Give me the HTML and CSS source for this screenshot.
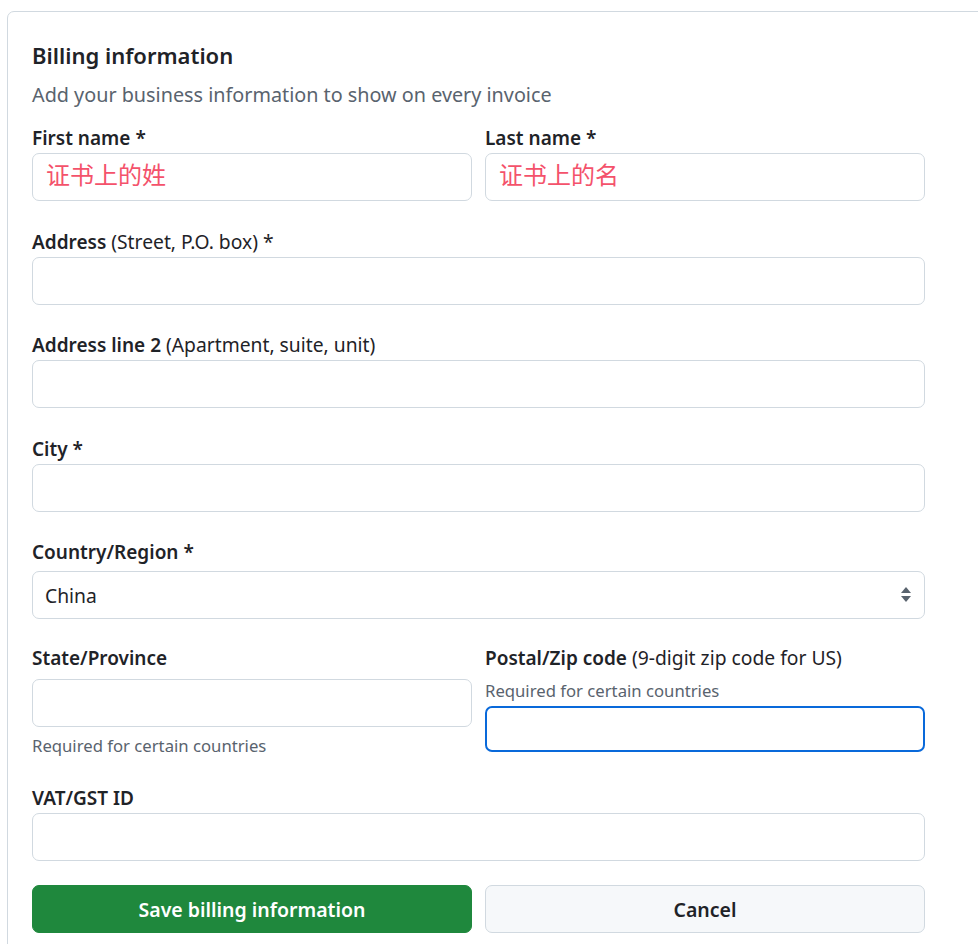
FILE: index.html
```html
<!DOCTYPE html>
<html lang="en">
<head>
<meta charset="utf-8">
<title>Billing information</title>
<link rel="stylesheet" href="styles.css">
</head>
<body>
<div class="card">
  <form class="form">
    <h2 class="title">Billing information</h2>
    <p class="subtitle">Add your business information to show on every invoice</p>

    <div class="row first-row">
      <div class="group">
        <label class="label">First name *</label>
        <input class="input cjk" type="text" placeholder="证书上的姓">
      </div>
      <div class="group">
        <label class="label">Last name *</label>
        <input class="input cjk" type="text" placeholder="证书上的名">
      </div>
    </div>

    <div class="group">
      <label class="label">Address <span class="note">(Street, P.O. box) *</span></label>
      <input class="input" type="text">
    </div>

    <div class="group tight">
      <label class="label">Address line 2 <span class="note">(Apartment, suite, unit)</span></label>
      <input class="input" type="text">
    </div>

    <div class="group">
      <label class="label">City *</label>
      <input class="input" type="text">
    </div>

    <div class="group tight">
      <label class="label select-label">Country/Region *</label>
      <div class="select">
        <span class="select-value">China</span>
        <svg class="select-arrow" width="12" height="18" viewBox="0 0 12 18" aria-hidden="true">
          <path d="M6 1 L11 7 L1 7 Z" fill="#59636e"/>
          <path d="M1 10 L11 10 L6 16 Z" fill="#59636e"/>
        </svg>
      </div>
    </div>

    <div class="row tight-row">
      <div class="group">
        <label class="label state-label">State/Province</label>
        <input class="input" type="text">
        <p class="help help-below">Required for certain countries</p>
      </div>
      <div class="group">
        <label class="label">Postal/Zip code <span class="note">(9-digit zip code for US)</span></label>
        <p class="help help-above">Required for certain countries</p>
        <input class="input focused" type="text">
      </div>
    </div>

    <div class="group tight">
      <label class="label">VAT/GST ID</label>
      <input class="input" type="text">
    </div>

    <div class="row buttons">
      <button type="button" class="btn btn-primary">Save billing information</button>
      <button type="button" class="btn btn-default">Cancel</button>
    </div>
  </form>
</div>
</body>
</html>
```

FILE: styles.css
```css
html, body {
  margin: 0;
  padding: 0;
  background: #ffffff;
  overflow: hidden;
}

body {
  font-family: "Noto Sans", "Noto Sans CJK SC", sans-serif;
  color: #1f2328;
  font-size: 19px;
}

.card {
  margin: 11px 0 0 7px;
  width: 1200px;
  height: 1000px;
  border: 1px solid #d1d9e0;
  border-radius: 7px;
  padding: 24px 0 0 24px;
  box-sizing: border-box;
}

.form {
  width: 893px;
  display: flex;
  flex-direction: column;
}

.title {
  margin: 4px 0 0;
  font-size: 22px;
  font-weight: 600;
  line-height: 30px;
}

.subtitle {
  margin: 13px 0 0;
  color: #59636e;
  font-size: 19.8px;
  line-height: 24px;
}

.row {
  display: flex;
  gap: 13px;
}

.row > .group {
  flex: 1;
}

.group {
  display: flex;
  flex-direction: column;
  margin-top: 29px;
}

.group.tight {
  margin-top: 28px;
}

.first-row {
  margin-top: 19px;
}

.first-row > .group {
  margin-top: 0;
}

.tight-row > .group {
  margin-top: 27px;
}

.label {
  font-weight: 600;
  font-size: 19px;
  line-height: 24px;
  margin-bottom: 3px;
  white-space: nowrap;
}

.select-label {
  margin-bottom: 7px;
}

.note {
  font-weight: 400;
  font-size: 19.3px;
}

.input {
  height: 48px;
  box-sizing: border-box;
  border: 1px solid #d1d9e0;
  border-radius: 7px;
  background: #ffffff;
  padding: 0 13px;
  font-family: inherit;
  font-size: 19px;
  color: #1f2328;
  outline: none;
}

.input.cjk::placeholder {
  color: #f4526b;
  font-family: "Noto Sans CJK SC", sans-serif;
  font-size: 24px;
}

.input.focused {
  border: 2px solid #0969da;
  height: 46px;
}

.select {
  height: 48px;
  box-sizing: border-box;
  border: 1px solid #d1d9e0;
  border-radius: 7px;
  padding: 0 12px;
  display: flex;
  align-items: center;
  justify-content: space-between;
}

.select-value {
  color: #1f2328;
  font-size: 19.3px;
}

.state-label {
  margin-bottom: 9px;
}

.help {
  margin: 0;
  color: #59636e;
  font-size: 16.7px;
  line-height: 24px;
}

.help-below {
  margin-top: 7px;
}

.help-above {
  margin-bottom: 3px;
  margin-top: 6px;
}

.buttons {
  margin-top: 24px;
}

.btn {
  flex: 1;
  height: 48px;
  border-radius: 7px;
  font-family: inherit;
  font-size: 19.5px;
  font-weight: 600;
  cursor: pointer;
}

.btn-primary {
  background: #1f883d;
  color: #ffffff;
  border: 1px solid #1f883d;
}

.btn-default {
  background: #f6f8fa;
  color: #1f2328;
  border: 1px solid #d1d9e0;
}
```
